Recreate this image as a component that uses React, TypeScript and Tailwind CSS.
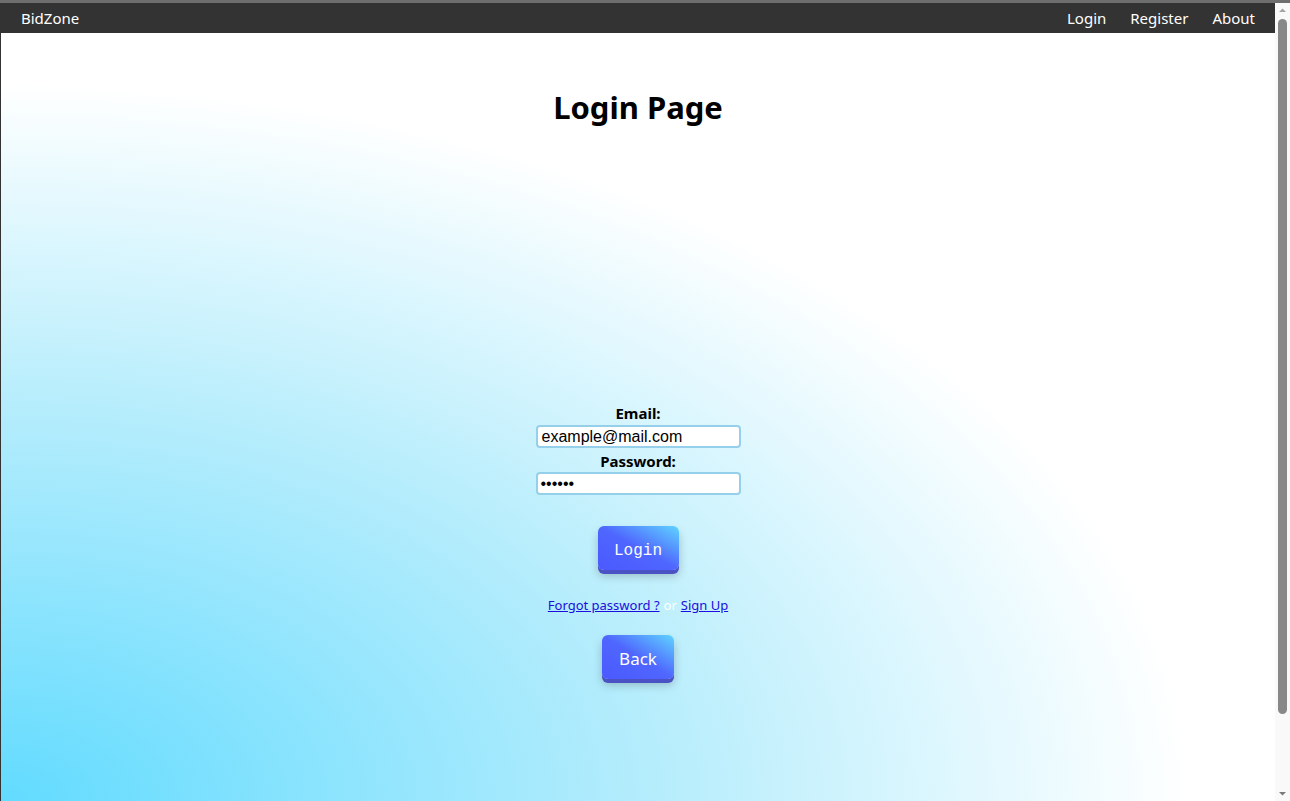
import React from "react";

const sans = { fontFamily: '"Noto Sans", "Open Sans", sans-serif' };

export default function App() {
  return (
    <div className="w-[1290px] h-[801px] flex flex-col overflow-hidden bg-[#6b6b6b]" style={sans}>
      <div className="h-[3px] shrink-0 bg-[#6e6e6e]" />
      <div className="flex-1 flex min-h-0">
        <div className="flex-1 flex flex-col border-l border-[#333333] min-w-0">
          <nav className="h-[30px] shrink-0 bg-[#333333] flex items-center justify-between pl-[20px] pr-[20px] text-white text-[15px]">
            <span>BidZone</span>
            <div className="flex items-center gap-[24px]">
              <span>Login</span>
              <span>Register</span>
              <span>About</span>
            </div>
          </nav>
          <main className="flex-1 flex flex-col items-center bg-[radial-gradient(ellipse_at_bottom_left,#62dbff_0%,#b2ecfc_35%,#ffffff_66%)]">
            <h1 className="mt-[52px] text-[31px] font-bold leading-[44px] text-black">Login Page</h1>
            <div className="mt-[275px] flex flex-col items-center">
              <label className="text-[15px] font-bold leading-[18px] text-black">Email:</label>
              <div className="mt-[3px] w-[205px] h-[23px] rounded-[4px] border-2 border-[#96cfea] bg-white flex items-center pl-[4px] text-[16px] text-black" style={{ fontFamily: '"Liberation Sans", Arial, sans-serif' }}>
                example@mail.com
              </div>
              <label className="mt-[4px] text-[15px] font-bold leading-[18px] text-black">Password:</label>
              <div className="mt-[2px] w-[205px] h-[23px] rounded-[4px] border-2 border-[#96cfea] bg-white flex items-center pl-[3px] text-[16px] text-black" style={{ fontFamily: '"Liberation Sans", Arial, sans-serif' }}>
                ••••••
              </div>
              <button className="mt-[31px] w-[81px] h-[44px] pt-[5px] rounded-[6px] text-white text-[16px] bg-[linear-gradient(to_top_right,#4b59ff_0%,#4f66ff_50%,#5fd4ff_100%)] shadow-[0_4px_0_#4b52c4,0_6px_10px_rgba(0,0,0,0.22)]" style={{ fontFamily: '"Liberation Mono", "DejaVu Sans Mono", monospace' }}>
                Login
              </button>
              <div className="mt-[26px] text-[13px] leading-[18px] flex items-center">
                <span className="underline text-[#1a0dde]">Forgot password ?</span>
                <span className="text-white mx-[4px]">or</span>
                <span className="underline text-[#1a0dde]">Sign Up</span>
              </div>
              <button className="mt-[21px] w-[72px] h-[44px] pt-[3px] rounded-[6px] text-white text-[17px] bg-[linear-gradient(to_top_right,#4b59ff_0%,#4f66ff_50%,#5fd4ff_100%)] shadow-[0_4px_0_#4b52c4,0_6px_10px_rgba(0,0,0,0.22)]">
                Back
              </button>
            </div>
          </main>
        </div>
        <div className="w-[15px] shrink-0 bg-[#f9f9f9] flex flex-col items-center">
          <svg width="15" height="14" viewBox="0 0 15 14" className="shrink-0">
            <path d="M4 9 L7.5 5.5 L11 9 Z" fill="#a3a3a3" />
          </svg>
          <div className="w-[9px] flex-1 rounded-full bg-[#888888] mt-[2px] mb-[73px]" />
          <svg width="15" height="14" viewBox="0 0 15 14" className="shrink-0">
            <path d="M4 5 L7.5 8.5 L11 5 Z" fill="#7a7a7a" />
          </svg>
        </div>
      </div>
    </div>
  );
}
